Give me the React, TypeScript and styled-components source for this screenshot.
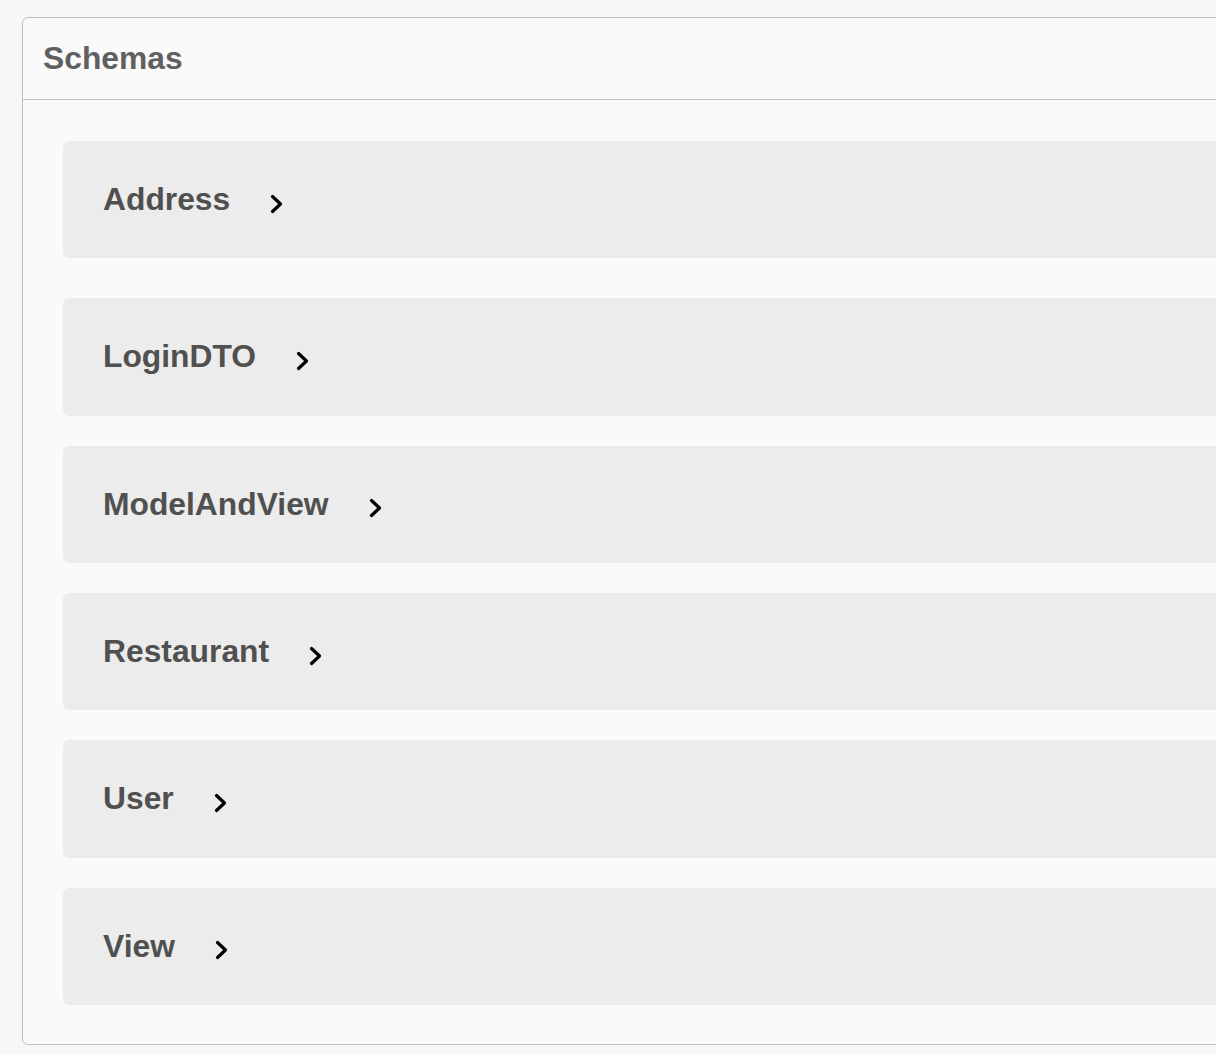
import React from "react";
import styled, { createGlobalStyle } from "styled-components";

const Global = createGlobalStyle`
  html, body {
    margin: 0;
    padding: 0;
    background: #f7f7f7;
    overflow: hidden;
  }
  body {
    font-family: "Liberation Sans", Arial, sans-serif;
  }
`;

const Page = styled.div`
  padding: 17px 0 0 22px;
`;

const Section = styled.section`
  width: 1300px;
  background: #fafafa;
  border: 1px solid #bfc0c6;
  border-radius: 6px;
  box-sizing: border-box;
`;

const Header = styled.h4`
  margin: 0;
  height: 81px;
  display: flex;
  align-items: center;
  padding: 0 20px;
  border-bottom: 1px solid #bfc0c6;
  font-size: 31.8px;
  font-weight: 700;
  color: #606060;
`;

const List = styled.div`
  display: flex;
  flex-direction: column;
  gap: 30px;
  padding: 41px 0 39px 40px;
`;

const Row = styled.div<{ $first?: boolean }>`
  height: 117.33px;
  background: #ececec;
  border-radius: 6px;
  display: flex;
  align-items: center;
  padding: 0 40px;
  margin-bottom: ${(p) => (p.$first ? "10px" : "0")};
`;

const Name = styled.span`
  font-size: 31.8px;
  font-weight: 700;
  color: #505050;
`;

const Chevron = styled.svg`
  margin-left: 39px;
  margin-top: 8px;
  width: 15px;
  height: 20px;
`;

const names = ["Address", "LoginDTO", "ModelAndView", "Restaurant", "User", "View"];

export default function App() {
  return (
    <>
      <Global />
      <Page>
        <Section>
          <Header>Schemas</Header>
          <List>
            {names.map((n, i) => (
              <Row key={n} $first={i === 0}>
                <Name>{n}</Name>
                <Chevron viewBox="0 0 15 20">
                  <polyline
                    points="3.5,2.5 11.5,10 3.5,17.5"
                    fill="none"
                    stroke="#000"
                    strokeWidth="3.2"
                    strokeLinecap="round"
                    strokeLinejoin="round"
                  />
                </Chevron>
              </Row>
            ))}
          </List>
        </Section>
      </Page>
    </>
  );
}
